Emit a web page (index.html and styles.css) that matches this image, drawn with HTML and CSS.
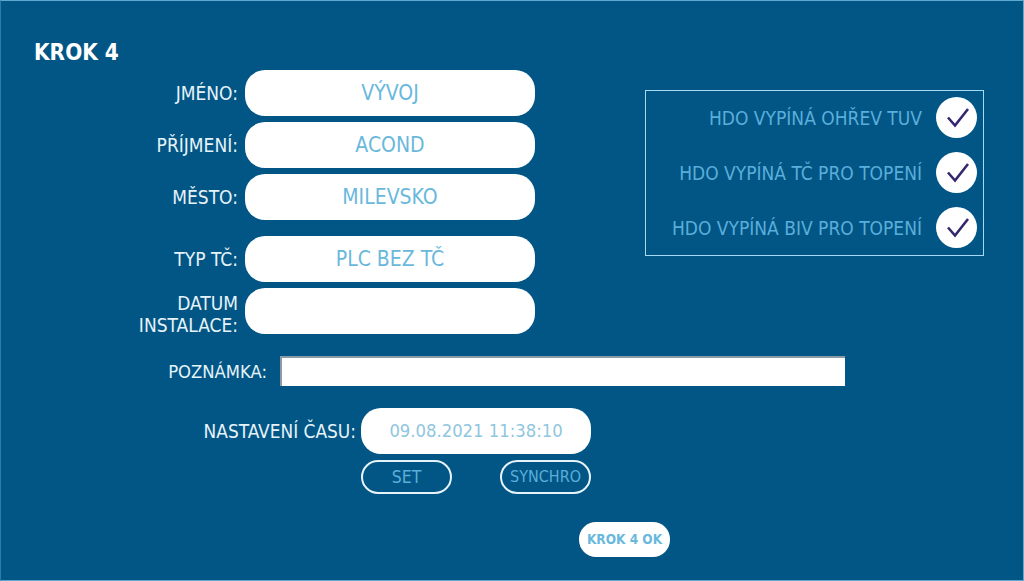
FILE: index.html
```html
<!DOCTYPE html>
<html lang="cs">
<head>
  <meta charset="UTF-8">
  <meta name="viewport" content="width=device-width, initial-scale=1.0">
  <title>Krok 4</title>
  <link rel="stylesheet" href="styles.css">
</head>
<body>

<div class="screen">
  <h1 class="title">KROK 4</h1>

  <div class="top">
    <div class="fields">
      <div class="row">
        <div class="label">JMÉNO:</div>
        <div class="pill">VÝVOJ</div>
      </div>
      <div class="row">
        <div class="label">PŘÍJMENÍ:</div>
        <div class="pill">ACOND</div>
      </div>
      <div class="row">
        <div class="label">MĚSTO:</div>
        <div class="pill">MILEVSKO</div>
      </div>
      <div class="row row-gap">
        <div class="label">TYP TČ:</div>
        <div class="pill">PLC BEZ TČ</div>
      </div>
      <div class="row">
        <div class="label label-two">DATUM<br>INSTALACE:</div>
        <div class="pill"></div>
      </div>
    </div>

    <div class="hdo">
      <div class="hdo-row">
        <span>HDO VYPÍNÁ OHŘEV TUV</span>
        <div class="check">
          <svg viewBox="0 0 40 40" width="40" height="40"><path d="M11 19.5 L18 27.5 L31 11" fill="none" stroke="#35266f" stroke-width="2.6"/></svg>
        </div>
      </div>
      <div class="hdo-row">
        <span>HDO VYPÍNÁ TČ PRO TOPENÍ</span>
        <div class="check">
          <svg viewBox="0 0 40 40" width="40" height="40"><path d="M11 19.5 L18 27.5 L31 11" fill="none" stroke="#35266f" stroke-width="2.6"/></svg>
        </div>
      </div>
      <div class="hdo-row">
        <span>HDO VYPÍNÁ BIV PRO TOPENÍ</span>
        <div class="check">
          <svg viewBox="0 0 40 40" width="40" height="40"><path d="M11 19.5 L18 27.5 L31 11" fill="none" stroke="#35266f" stroke-width="2.6"/></svg>
        </div>
      </div>
    </div>
  </div>

  <div class="note">
    <div class="note-label">POZNÁMKA:</div>
    <div class="note-input"></div>
  </div>

  <div class="time">
    <div class="time-label">NASTAVENÍ ČASU:</div>
    <div class="time-value">09.08.2021 11:38:10</div>
  </div>

  <div class="time-buttons">
    <div class="btn-outline">SET</div>
    <div class="btn-outline btn-small">SYNCHRO</div>
  </div>

  <div class="step-ok">KROK 4 OK</div>
</div>

</body>
</html>
```

FILE: styles.css
```css
body {
  margin: 0;
  padding: 0;
  background-color: #025685;
  font-family: "DejaVu Sans", Verdana, sans-serif;
  font-stretch: condensed;
}

.screen {
  box-sizing: border-box;
  width: 1024px;
  height: 581px;
  overflow: hidden;
  border-top: 1px solid #5fa9cf;
  border-right: 1px solid #5fa9cf;
  border-bottom: 1px solid #5fa9cf;
  border-left: 1px solid #2c7ba8;
  background-color: #025685;
}

.title {
  margin: 0;
  padding: 39px 0 0 33px;
  height: 30px;
  font-size: 22.4px;
  line-height: 24px;
  font-weight: bold;
  color: #fff;
}

.top {
  display: flex;
  align-items: flex-start;
}

.fields {
  width: 644px;
  display: flex;
  flex-direction: column;
  gap: 6px;
}

.row {
  display: flex;
  align-items: center;
}

.row-gap {
  margin-top: 10px;
}

.label {
  width: 237px;
  text-align: right;
  font-size: 19px;
  line-height: 19px;
  color: #e6f3fa;
}

.label-two {
  margin: 4px 0 -2px;
  line-height: 22.2px;
}

.pill {
  box-sizing: border-box;
  width: 290px;
  height: 46px;
  margin-left: 7px;
  border-radius: 20px;
  background-color: #fff;
  color: #69b8dc;
  font-size: 21px;
  line-height: 46px;
  text-align: center;
}

.hdo {
  box-sizing: border-box;
  width: 339px;
  height: 166px;
  margin-top: 20px;
  border: 1px solid #a6daf2;
  padding: 6px 6px 0 0;
  display: flex;
  flex-direction: column;
  gap: 14px;
}

.hdo-row {
  display: flex;
  justify-content: flex-end;
  align-items: center;
  gap: 14px;
  color: #5aaedb;
  font-size: 19px;
}

.check {
  width: 41px;
  height: 41px;
  border-radius: 50%;
  background-color: #fff;
  display: flex;
  align-items: center;
  justify-content: center;
}

.note {
  display: flex;
  align-items: center;
  margin-top: 22px;
}

.note-label {
  width: 266px;
  text-align: right;
  font-size: 18.3px;
  color: #e6f3fa;
}

.note-input {
  box-sizing: border-box;
  width: 565px;
  height: 30px;
  margin-left: 13px;
  background-color: #fff;
  border-top: 2px solid #8a9ba6;
  border-left: 2px solid #8a9ba6;
}

.time {
  display: flex;
  align-items: center;
  margin-top: 22px;
}

.time-label {
  width: 355px;
  text-align: right;
  font-size: 18.9px;
  color: #e6f3fa;
}

.time-value {
  width: 230px;
  height: 46px;
  margin-left: 5px;
  border-radius: 20px;
  background-color: #fff;
  color: #8fc6de;
  font-size: 18.3px;
  line-height: 46px;
  text-align: center;
}

.time-buttons {
  display: flex;
  gap: 48px;
  margin: 6px 0 0 360px;
}

.btn-outline {
  box-sizing: border-box;
  width: 91px;
  height: 34px;
  border: 2px solid #e6f3fa;
  border-radius: 17px;
  color: #5aaedb;
  font-size: 17.5px;
  line-height: 30px;
  text-align: center;
}

.btn-small {
  font-size: 16px;
}

.step-ok {
  width: 91px;
  height: 35px;
  margin: 28px 0 0 578px;
  border-radius: 17px;
  background-color: #fff;
  color: #69b8dc;
  font-size: 13.5px;
  font-weight: bold;
  line-height: 35px;
  text-align: center;
}
```
